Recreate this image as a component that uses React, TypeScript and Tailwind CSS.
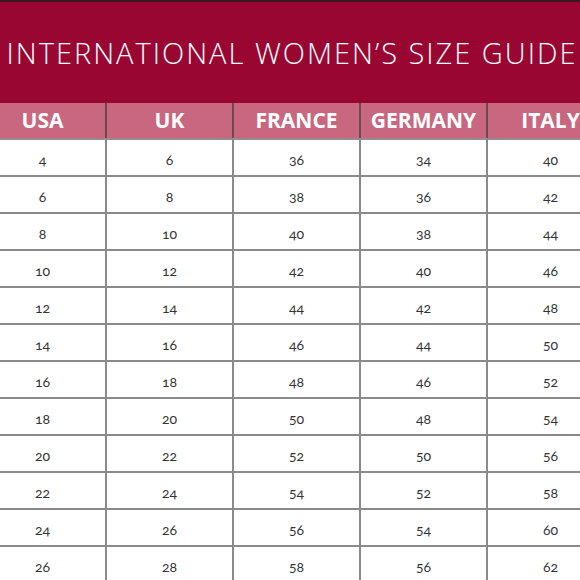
import React from "react";

const headers = ["USA", "UK", "FRANCE", "GERMANY", "ITALY"];
const rows = [
  [4, 6, 36, 34, 40],
  [6, 8, 38, 36, 42],
  [8, 10, 40, 38, 44],
  [10, 12, 42, 40, 46],
  [12, 14, 44, 42, 48],
  [14, 16, 46, 44, 50],
  [16, 18, 48, 46, 52],
  [18, 20, 50, 48, 54],
  [20, 22, 52, 50, 56],
  [22, 24, 54, 52, 58],
  [24, 26, 56, 54, 60],
  [26, 28, 58, 56, 62],
];

export default function App() {
  return (
    <div className="w-[580px] h-[580px] overflow-hidden bg-white relative">
      <div className="h-[103px] bg-[#9a0632] border-t-2 border-[#3b1820] flex items-center justify-center">
        <div
          className="whitespace-nowrap text-white text-[29px] font-light tracking-[2px] pl-[4px] pt-[1px]"
          style={{ fontFamily: "'Open Sans', sans-serif" }}
        >
          INTERNATIONAL WOMEN’S SIZE GUIDE
        </div>
      </div>
      <div className="ml-[-20px] w-[635px]" style={{ fontFamily: "Lato, sans-serif" }}>
        <div className="grid grid-cols-[127px_127px_127px_127px_127px] h-[37px] bg-[#c8677f] border-b-2 border-[#9a8a8e]">
          {headers.map((h) => (
            <div
              key={h}
              className="flex items-center justify-center border-r-2 border-[#6b4a52] text-white font-bold text-[21px]"
              style={{ fontFamily: "'Open Sans', sans-serif" }}
            >
              {h}
            </div>
          ))}
        </div>
        {rows.map((r, i) => (
          <div
            key={i}
            className="grid grid-cols-[127px_127px_127px_127px_127px] h-[37px] border-b-2 border-[#8a8a8a]"
          >
            {r.map((v, j) => (
              <div
                key={j}
                className="flex items-center justify-center border-r-2 border-[#8a8a8a] text-[14px] text-[#333] oldstyle-nums pt-[3px]"
              >
                {v}
              </div>
            ))}
          </div>
        ))}
      </div>
    </div>
  );
}
